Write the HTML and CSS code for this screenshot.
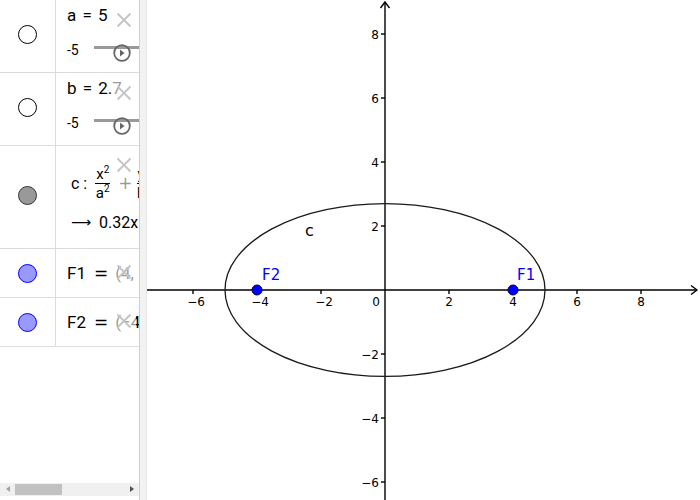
FILE: index.html
```html
<!DOCTYPE html>
<html>
<head>
<meta charset="utf-8">
<link rel="stylesheet" href="styles.css">
</head>
<body>
<div class="app">
  <div class="algebra">
    <div class="rows">
      <div class="row row-slider">
        <div class="marker-cell lift"><span class="marker open"></span></div>
        <div class="content">
          <div class="def">a = 5</div>
          <div class="slider-line"><span class="min">-5</span><span class="track"></span></div>
          <div class="delete"><svg viewBox="0 0 16 16" width="16" height="16"><path d="M1.5 1.5 L14.5 14.5 M14.5 1.5 L1.5 14.5" /></svg></div>
          <div class="play"><svg viewBox="0 0 18 18" width="18" height="18"><circle cx="9" cy="9" r="7.8"/><path d="M7 5.6 L11.6 9 L7 12.4 Z"/></svg></div>
        </div>
      </div>
      <div class="row row-slider">
        <div class="marker-cell lift"><span class="marker open"></span></div>
        <div class="content">
          <div class="def">b = 2.7</div>
          <div class="slider-line"><span class="min">-5</span><span class="track"></span></div>
          <div class="delete"><svg viewBox="0 0 16 16" width="16" height="16"><path d="M1.5 1.5 L14.5 14.5 M14.5 1.5 L1.5 14.5" /></svg></div>
          <div class="play"><svg viewBox="0 0 18 18" width="18" height="18"><circle cx="9" cy="9" r="7.8"/><path d="M7 5.6 L11.6 9 L7 12.4 Z"/></svg></div>
        </div>
      </div>
      <div class="row row-conic">
        <div class="marker-cell lift"><span class="marker gray"></span></div>
        <div class="content">
          <div class="formula">
            <span class="name">c :</span>
            <span class="frac"><span class="num">x<sup>2</sup></span><span class="den">a<sup>2</sup></span></span>
            <span class="op">+</span>
            <span class="frac"><span class="num">y<sup>2</sup></span><span class="den">b<sup>2</sup></span></span>
          </div>
          <div class="output"><span class="arrow">⟶</span><span class="val">0.32x</span></div>
          <div class="delete tall"><svg viewBox="0 0 16 16" width="16" height="16"><path d="M1.5 1.5 L14.5 14.5 M14.5 1.5 L1.5 14.5" /></svg></div>
        </div>
      </div>
      <div class="row row-point">
        <div class="marker-cell"><span class="marker blue"></span></div>
        <div class="content">
          <div class="pt">F1<span class="eq">=</span>(4,</div>
          <div class="delete"><svg viewBox="0 0 16 16" width="16" height="16"><path d="M1.5 1.5 L14.5 14.5 M14.5 1.5 L1.5 14.5" /></svg></div>
        </div>
      </div>
      <div class="row row-point">
        <div class="marker-cell"><span class="marker blue"></span></div>
        <div class="content">
          <div class="pt">F2<span class="eq">=</span>(−4,</div>
          <div class="delete"><svg viewBox="0 0 16 16" width="16" height="16"><path d="M1.5 1.5 L14.5 14.5 M14.5 1.5 L1.5 14.5" /></svg></div>
        </div>
      </div>
    </div>
    <div class="hscroll">
      <span class="arr-left"></span>
      <span class="thumb"></span>
      <span class="arr-right"></span>
    </div>
  </div>
  <div class="divider"></div>
  <div class="graphics">
    <svg viewBox="147 0 553 500" width="553" height="500">
      <g class="axes">
        <line x1="147" y1="290" x2="697" y2="290"/>
        <polyline points="691,285.5 697,290 691,294.5" fill="none"/>
        <line x1="385" y1="2" x2="385" y2="500"/>
        <polyline points="380.5,8 385,2 389.5,8" fill="none"/>
        <line x1="193" y1="290" x2="193" y2="294"/>
        <line x1="257" y1="290" x2="257" y2="294"/>
        <line x1="321" y1="290" x2="321" y2="294"/>
        <line x1="449" y1="290" x2="449" y2="294"/>
        <line x1="513" y1="290" x2="513" y2="294"/>
        <line x1="577" y1="290" x2="577" y2="294"/>
        <line x1="641" y1="290" x2="641" y2="294"/>
        <line x1="381" y1="34" x2="385" y2="34"/>
        <line x1="381" y1="98" x2="385" y2="98"/>
        <line x1="381" y1="162" x2="385" y2="162"/>
        <line x1="381" y1="226" x2="385" y2="226"/>
        <line x1="381" y1="354" x2="385" y2="354"/>
        <line x1="381" y1="418" x2="385" y2="418"/>
        <line x1="381" y1="482" x2="385" y2="482"/>
      </g>
      <g class="ticklabels xl">
        <text x="196" y="306">−6</text>
        <text x="260" y="306">−4</text>
        <text x="324" y="306">−2</text>
        <text x="449" y="306">2</text>
        <text x="513" y="306">4</text>
        <text x="577" y="306">6</text>
        <text x="641" y="306">8</text>
      </g>
      <g class="ticklabels yl">
        <text x="380" y="306">0</text>
        <text x="379" y="38.5">8</text>
        <text x="379" y="102.5">6</text>
        <text x="379" y="166.5">4</text>
        <text x="379" y="230.5">2</text>
        <text x="379" y="358.5">−2</text>
        <text x="379" y="422.5">−4</text>
        <text x="379" y="486.5">−6</text>
      </g>
      <ellipse class="conic" cx="385" cy="290" rx="160" ry="86.4"/>
      <text class="clabel" x="305" y="236">c</text>
      <circle class="pt-dot" cx="257" cy="290" r="5"/>
      <circle class="pt-dot" cx="513" cy="290" r="5"/>
      <text class="plabel" x="262" y="280">F2</text>
      <text class="plabel" x="517" y="280">F1</text>
    </svg>
  </div>
</div>
</body>
</html>
```
FILE: styles.css
```css
html, body {
  margin: 0;
  padding: 0;
  background: #ffffff;
}
.app {
  display: flex;
  width: 700px;
  height: 500px;
  overflow: hidden;
  font-family: Roboto, "Liberation Sans", sans-serif;
  color: #000;
}
.algebra {
  width: 139px;
  height: 500px;
  display: flex;
  flex-direction: column;
  overflow: hidden;
  background: #fff;
}
.rows {
  display: flex;
  flex-direction: column;
}
.row {
  display: grid;
  grid-template-columns: 56px 83px;
  border-bottom: 1px solid #dcdcdc;
}
.row-slider { height: 72px; }
.row-conic { height: 102px; }
.row-point { height: 48px; }
.marker-cell {
  border-right: 1px solid #dcdcdc;
  display: flex;
  align-items: center;
  justify-content: center;
}
.marker-cell.lift { padding-bottom: 4px; }
.marker {
  display: block;
  width: 17px;
  height: 17px;
  border-radius: 50%;
  box-sizing: content-box;
}
.marker.open { background: #fff; border: 1px solid #000; }
.marker.gray { background: #999999; border: 1px solid #333; }
.marker.blue { background: #9999ff; border: 1px solid #0000ff; }
.content {
  position: relative;
  overflow: hidden;
  padding-left: 11px;
}
.row-slider .content { padding-top: 5px; }
.def {
  font-size: 17px;
  line-height: 21px;
  word-spacing: 2px;
  white-space: nowrap;
}
.slider-line {
  display: flex;
  align-items: flex-start;
  margin-top: 15px;
  height: 17px;
}
.min {
  font-size: 14px;
  line-height: 17px;
  margin-top: 1px;
}
.track {
  display: block;
  width: 60px;
  height: 3px;
  background: #999999;
  margin-top: 5px;
  margin-left: 15px;
  flex-shrink: 0;
}
.delete {
  position: absolute;
  left: 56px;
  top: 8px;
  width: 24px;
  height: 24px;
  display: flex;
  align-items: center;
  justify-content: center;
  background: rgba(255,255,255,0.6);
}
.delete.tall { top: 7px; height: 44px; align-items: flex-start; padding-top: 4px; box-sizing: border-box; }
.delete svg path {
  stroke: #c4c4c4;
  stroke-width: 1.8;
  fill: none;
}
.play {
  position: absolute;
  left: 57px;
  top: 44px;
  width: 18px;
  height: 18px;
}
.play svg circle { fill: none; stroke: #666; stroke-width: 1.8; }
.play svg path { fill: #666; }

.row-conic .content { padding-left: 15px; }
.formula {
  display: flex;
  align-items: center;
  white-space: nowrap;
  margin-top: 20px;
  height: 34px;
}
.name {
  font-size: 16px;
  margin-right: 8px;
}
.frac {
  display: inline-flex;
  flex-direction: column;
  align-items: center;
  font-size: 15px;
  line-height: 16px;
}
.frac .num { border-bottom: 1px solid #000; padding: 0 1px 1px; }
.frac .den { padding-top: 1px; }
.frac sup { font-size: 10px; vertical-align: 6px; line-height: 0; }
.op {
  font-size: 17px;
  margin: 0 4px 0 8px;
  font-family: "DejaVu Sans", sans-serif;
  color: #000;
}
.output {
  display: flex;
  align-items: center;
  white-space: nowrap;
  margin-top: 12px;
  height: 20px;
}
.arrow {
  font-family: "DejaVu Sans", sans-serif;
  font-size: 14px;
  width: 28px;
}
.val {
  font-size: 16px;
}
.row-point .content {
  display: flex;
  align-items: center;
}
.pt {
  font-size: 17px;
  white-space: nowrap;
}
.eq {
  font-family: "DejaVu Sans", sans-serif;
  margin: 0 7px 0 8px;
}
.row-point .delete { top: 11px; }

.hscroll {
  position: relative;
  margin-top: auto;
  margin-bottom: 4px;
  height: 13px;
  background: #f0f0f0;
}
.thumb {
  position: absolute;
  left: 15px;
  top: 1px;
  width: 47px;
  height: 11px;
  background: #c1c1c1;
}
.arr-left {
  position: absolute;
  left: 6px;
  top: 3px;
  width: 0;
  height: 0;
  border-top: 3.5px solid transparent;
  border-bottom: 3.5px solid transparent;
  border-right: 4px solid #a3a3a3;
}
.arr-right {
  position: absolute;
  left: 130px;
  top: 3px;
  width: 0;
  height: 0;
  border-top: 3.5px solid transparent;
  border-bottom: 3.5px solid transparent;
  border-left: 4px solid #505050;
}
.divider {
  width: 6px;
  height: 500px;
  background: #f2f2f2;
  border-left: 1px solid #cfcfcf;
  border-right: 1px solid #e6e6e6;
}
.graphics {
  width: 553px;
  height: 500px;
}
.graphics svg { display: block; }
.axes line, .axes polyline {
  stroke: #000;
  stroke-width: 1.4;
}
.ticklabels text {
  font-family: "DejaVu Sans", sans-serif;
  font-size: 12px;
  fill: #000;
}
.xl text { text-anchor: middle; }
.yl text { text-anchor: end; }
.conic {
  fill: none;
  stroke: #1a1a1a;
  stroke-width: 1.3;
}
.clabel {
  font-family: "DejaVu Sans", sans-serif;
  font-size: 16px;
  fill: #000;
}
.pt-dot {
  fill: #0000ff;
  stroke: #000040;
  stroke-width: 1;
}
.plabel {
  font-family: "DejaVu Sans", sans-serif;
  font-size: 15px;
  fill: #0000ff;
}
```
